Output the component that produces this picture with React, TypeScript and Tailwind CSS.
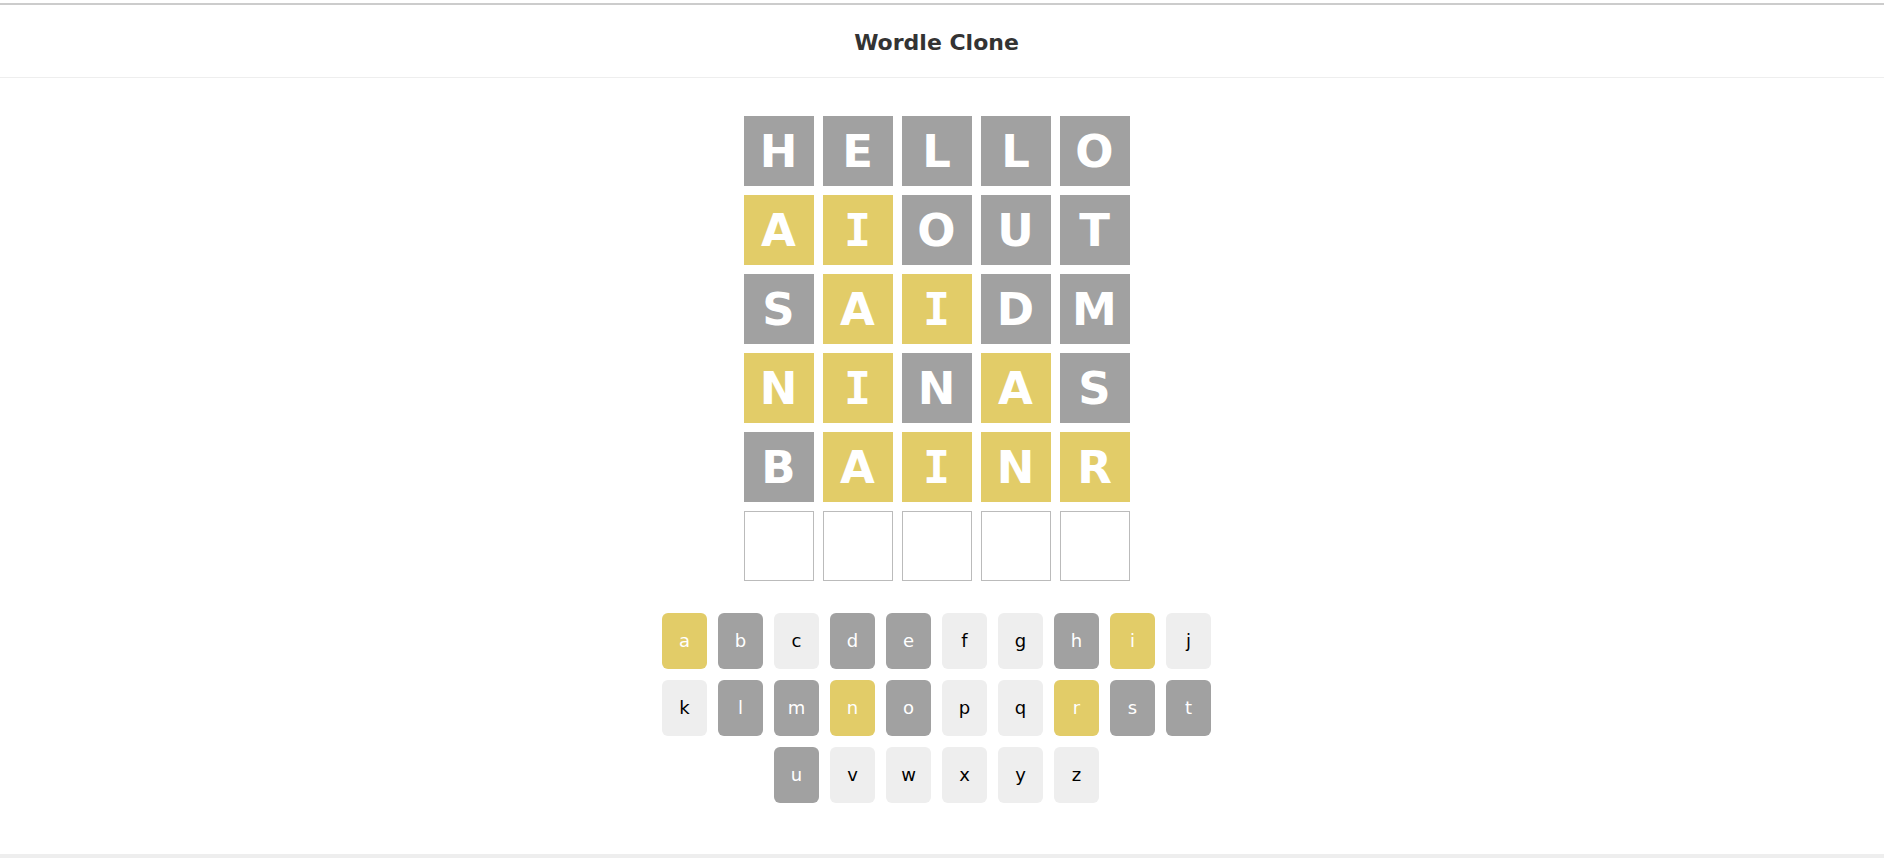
type Mark = 'grey' | 'gold' | 'none';

const tileColors: Record<Mark, string> = {
  grey: 'bg-[#a1a1a1] text-white',
  gold: 'bg-[#e2cc68] text-white',
  none: 'border border-[#bbbbbb]',
};

const keyColors: Record<Mark, string> = {
  grey: 'bg-[#a1a1a1] text-white',
  gold: 'bg-[#e2cc68] text-white',
  none: 'bg-[#eeeeee] text-black',
};

const guesses: { word: string; gold: number[] }[] = [
  { word: 'HELLO', gold: [] },
  { word: 'AIOUT', gold: [0, 1] },
  { word: 'SAIDM', gold: [1, 2] },
  { word: 'NINAS', gold: [0, 1, 3] },
  { word: 'BAINR', gold: [1, 2, 3, 4] },
  { word: '     ', gold: [] },
];

const letters = 'abcdefghijklmnopqrstuvwxyz'.split('');

function keyMark(letter: string): Mark {
  if ('ainr'.includes(letter)) return 'gold';
  return 'bdehlmostu'.includes(letter) ? 'grey' : 'none';
}

function tileMark(letter: string, gold: boolean): Mark {
  if (letter === ' ') return 'none';
  return gold ? 'gold' : 'grey';
}

// The capital I is set with slab serifs, which the sans face lacks.
function tileFont(letter: string): string {
  return letter === 'I' ? "font-['DejaVu_Sans_Mono',monospace]" : "font-['DejaVu_Sans',sans-serif]";
}

export default function App() {
  return (
    <div className="flex min-h-screen flex-col border-b-4 border-[#eeeeee] bg-white pt-[3px] font-['DejaVu_Sans',sans-serif] text-[#333333]">
      <header className="border-t-2 border-b border-t-[#cccccc] border-b-[#eeeeee] pt-[22px] pr-[11px] pb-[18px]">
        <h1 className="text-center text-[22px] leading-8 font-bold">Wordle Clone</h1>
      </header>
      <main className="flex grow flex-col items-center pt-[38px] pr-[11px]">
        <div className="flex flex-col gap-[9px]">
          {guesses.map((guess, row) => (
            <div key={row} className="flex gap-[9px]">
              {guess.word.split('').map((letter, i) => (
                <div
                  key={i}
                  className={`flex size-[70px] items-center justify-center text-[45px] leading-none font-bold ${tileFont(letter)} ${tileColors[tileMark(letter, guess.gold.includes(i))]}`}
                >
                  {letter}
                </div>
              ))}
            </div>
          ))}
        </div>
        <div className="mt-8 flex max-w-[560px] flex-wrap justify-center gap-[11px]">
          {letters.map((letter) => (
            <button key={letter} type="button" className={`h-14 w-[45px] rounded-md text-lg ${keyColors[keyMark(letter)]}`}>
              {letter}
            </button>
          ))}
        </div>
      </main>
    </div>
  );
}
